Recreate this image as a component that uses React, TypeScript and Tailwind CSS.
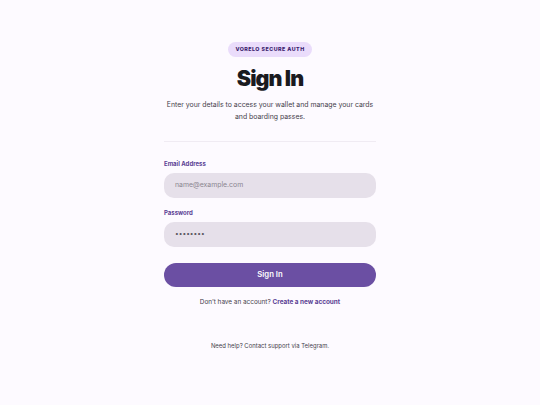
import React from "react";

export default function App() {
  return (
    <div className="w-[540px] h-[405px] bg-[#fdfaff] flex flex-col items-center" style={{ fontFamily: "Inter, 'Noto Sans', sans-serif" }}>
      <div className="w-[212px] flex flex-col items-center pt-[42px]">
        <div className="h-[15px] px-[7px] rounded-full bg-[#eadcfb] flex items-center text-[5.3px] font-extrabold tracking-[0.09em] text-[#3b1d6e]">
          VORELO SECURE AUTH
        </div>
        <h1 className="mt-[9px] h-[24px] leading-[24px] text-[21.5px] font-black tracking-[-0.045em] text-[#1a1a1f]">Sign In</h1>
        <p className="mt-[9px] w-[207px] text-center text-[6.9px] leading-[11.5px] text-[#45414b]">
          Enter your details to access your wallet and manage your cards and boarding passes.
        </p>
        <div className="mt-[19px] w-full h-px bg-[#f0ebf3]" />
        <form className="w-full flex flex-col mt-[18px]">
          <label className="text-[6px] leading-[8px] font-bold text-[#5b3f94]">Email Address</label>
          <div className="mt-[5px] h-[25px] rounded-[10px] bg-[#e6e0ea] flex items-center px-[11px] text-[6.9px] text-[#8b8690]">
            name@example.com
          </div>
          <label className="mt-[11px] text-[6px] leading-[8px] font-bold text-[#5b3f94]">Password</label>
          <div className="mt-[5px] h-[25px] rounded-[10px] bg-[#e6e0ea] flex items-center px-[11px] text-[6.6px] text-[#5a5660]">
            ••••••••
          </div>
          <button type="button" className="mt-[16px] h-[24px] rounded-full bg-[#6b4fa3] text-white text-[7.7px] font-semibold flex items-center justify-center">
            Sign In
          </button>
        </form>
        <p className="mt-[11px] text-[6.4px] leading-[8px] text-[#45414b]">
          Don’t have an account? <span className="font-bold text-[#5b3f94]">Create a new account</span>
        </p>
        <p className="mt-[36px] text-[5.95px] leading-[8px] text-[#45414b]">Need help? Contact support via Telegram.</p>
      </div>
    </div>
  );
}
